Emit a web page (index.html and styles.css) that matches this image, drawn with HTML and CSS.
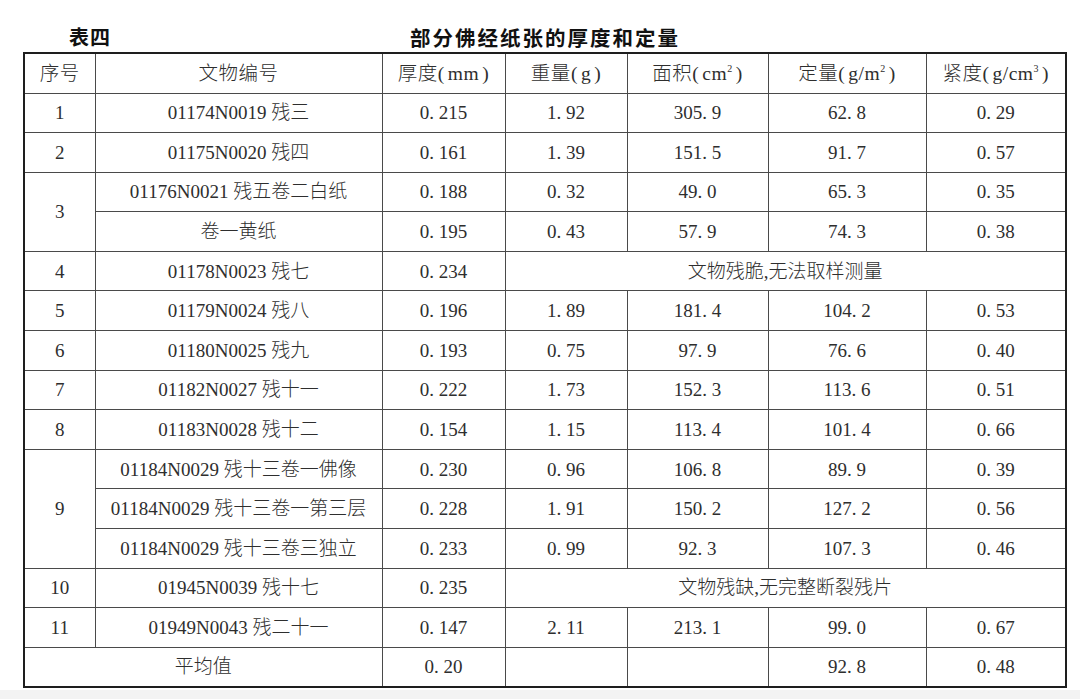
FILE: index.html
```html
<!DOCTYPE html>
<html lang="zh-CN">
<head>
<meta charset="utf-8">
<link rel="stylesheet" href="styles.css">
</head>
<body>
<div class="page">
  <div class="caption">
    <span class="cap-no">表四</span>
    <span class="cap-title">部分佛经纸张的厚度和定量</span>
  </div>
  <table class="data">
    <colgroup>
      <col class="c1"><col class="c2"><col class="c3"><col class="c4"><col class="c5"><col class="c6"><col class="c7">
    </colgroup>
    <thead>
      <tr class="head">
        <th>序号</th>
        <th>文物编号</th>
        <th>厚度<span class="po">(</span>mm<span class="pc">)</span></th>
        <th>重量<span class="po">(</span>g<span class="pc">)</span></th>
        <th>面积<span class="po">(</span>cm<sup>2</sup><span class="pc">)</span></th>
        <th>定量<span class="po">(</span>g/m<sup>2</sup><span class="pc">)</span></th>
        <th>紧度<span class="po">(</span>g/cm<sup>3</sup><span class="pc">)</span></th>
      </tr>
    </thead>
    <tbody>
      <tr><td>1</td><td>01174N0019 残三</td><td>0. 215</td><td>1. 92</td><td>305. 9</td><td>62. 8</td><td>0. 29</td></tr>
      <tr><td>2</td><td>01175N0020 残四</td><td>0. 161</td><td>1. 39</td><td>151. 5</td><td>91. 7</td><td>0. 57</td></tr>
      <tr><td rowspan="2">3</td><td>01176N0021 残五卷二白纸</td><td>0. 188</td><td>0. 32</td><td>49. 0</td><td>65. 3</td><td>0. 35</td></tr>
      <tr><td>卷一黄纸</td><td>0. 195</td><td>0. 43</td><td>57. 9</td><td>74. 3</td><td>0. 38</td></tr>
      <tr><td>4</td><td>01178N0023 残七</td><td>0. 234</td><td colspan="4">文物残脆,无法取样测量</td></tr>
      <tr><td>5</td><td>01179N0024 残八</td><td>0. 196</td><td>1. 89</td><td>181. 4</td><td>104. 2</td><td>0. 53</td></tr>
      <tr><td>6</td><td>01180N0025 残九</td><td>0. 193</td><td>0. 75</td><td>97. 9</td><td>76. 6</td><td>0. 40</td></tr>
      <tr><td>7</td><td>01182N0027 残十一</td><td>0. 222</td><td>1. 73</td><td>152. 3</td><td>113. 6</td><td>0. 51</td></tr>
      <tr><td>8</td><td>01183N0028 残十二</td><td>0. 154</td><td>1. 15</td><td>113. 4</td><td>101. 4</td><td>0. 66</td></tr>
      <tr><td rowspan="3">9</td><td>01184N0029 残十三卷一佛像</td><td>0. 230</td><td>0. 96</td><td>106. 8</td><td>89. 9</td><td>0. 39</td></tr>
      <tr><td>01184N0029 残十三卷一第三层</td><td>0. 228</td><td>1. 91</td><td>150. 2</td><td>127. 2</td><td>0. 56</td></tr>
      <tr><td>01184N0029 残十三卷三独立</td><td>0. 233</td><td>0. 99</td><td>92. 3</td><td>107. 3</td><td>0. 46</td></tr>
      <tr><td>10</td><td>01945N0039 残十七</td><td>0. 235</td><td colspan="4">文物残缺,无完整断裂残片</td></tr>
      <tr><td>11</td><td>01949N0043 残二十一</td><td>0. 147</td><td>2. 11</td><td>213. 1</td><td>99. 0</td><td>0. 67</td></tr>
      <tr class="avg"><td colspan="2">平均值</td><td>0. 20</td><td></td><td></td><td>92. 8</td><td>0. 48</td></tr>
    </tbody>
  </table>
  <div class="foot"></div>
</div>
</body>
</html>
```

FILE: styles.css
```css
html, body {
  margin: 0;
  padding: 0;
  background: #ffffff;
}

.page {
  width: 1080px;
  height: 699px;
  overflow: hidden;
  display: flex;
  flex-direction: column;
}

.caption {
  height: 52px;
  display: flex;
  align-items: flex-end;
  padding-left: 69px;
  padding-bottom: 5px;
  box-sizing: border-box;
  font-family: "Noto Sans CJK SC", sans-serif;
  font-weight: 700;
  color: #111;
  font-size: 20px;
  line-height: 1;
}

.cap-no {
  letter-spacing: 1px;
}

.cap-title {
  margin-left: 299px;
  letter-spacing: 2px;
  font-size: 20.5px;
}

.data {
  margin-left: 23px;
  width: 1042px;
  table-layout: fixed;
  border-collapse: collapse;
  border: 2px solid #1e1e1e;
  font-family: "Liberation Serif", "Noto Sans CJK SC", serif;
  font-size: 19px;
  font-weight: 300;
  color: #2e2e2e;
}

.c1 { width: 71px; }
.c2 { width: 287px; }
.c3 { width: 123px; }
.c4 { width: 122px; }
.c5 { width: 141px; }
.c6 { width: 158px; }
.c7 { width: 140px; }

.data th,
.data td {
  border: 1px solid #4a4a4a;
  text-align: center;
  vertical-align: middle;
  padding: 0;
  font-weight: 300;
  white-space: nowrap;
  line-height: 1;
}

.data tr {
  height: 39.6px;
}

.data tr.head {
  height: 40px;
}

.data th {
  font-size: 19.5px;
  letter-spacing: 0.5px;
}

.po {
  margin-right: 3px;
}

.pc {
  margin-left: 3px;
}

.data sup {
  font-size: 10px;
  vertical-align: 8px;
  line-height: 0;
}

.foot {
  flex: 1;
  margin-top: 2px;
  background: #f3f3f3;
}
```
